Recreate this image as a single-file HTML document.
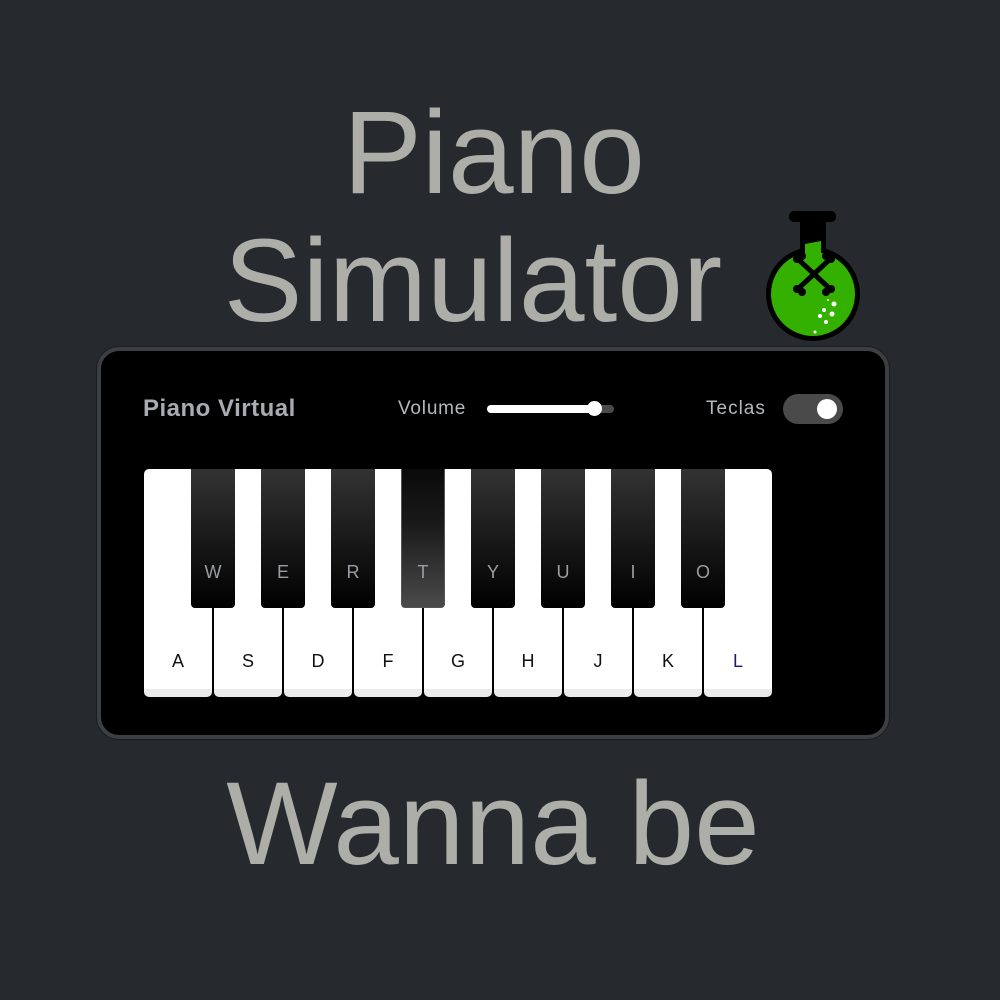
<!DOCTYPE html>
<html><head><meta charset="utf-8"><style>
*{margin:0;padding:0;box-sizing:border-box}
body{width:1000px;height:1000px;background:#262a2f;position:relative;overflow:hidden;font-family:"Liberation Sans",sans-serif}
.t{position:absolute;left:0;width:1000px;text-align:center;color:#aeaea8;font-size:118px;line-height:1;white-space:nowrap}
.panel{position:absolute;left:97px;top:347px;width:792px;height:392px;border-radius:22px;background:#000;border:4px solid #3b3f44;box-shadow:0 0 0 1px #1b1e21}
.lbl{position:absolute;color:#b5b9bd;font-size:18px}
.w{position:absolute;top:469px;width:68px;height:228px;background:#fff;border-radius:5px;border-bottom:8px solid #ebebeb;color:#111;font-size:18px;text-align:center;padding-top:182px}
.b{position:absolute;top:469px;width:44px;height:139px;background:linear-gradient(#333,#000);border-radius:0 0 4px 4px;color:#9a9ea3;font-size:18px;text-align:center;padding-top:93px}
</style></head><body>
<div class="t" style="top:94px;left:-6px">Piano</div>
<div class="t" style="top:222px;left:-27px">Simulator</div>
<div class="t" style="top:765px;left:-7px">Wanna be</div>
<svg style="position:absolute;left:760px;top:205px" width="110" height="140" viewBox="760 205 110 140">
<rect x="789" y="211" width="47" height="11" rx="5" fill="#000"/>
<rect x="800" y="220" width="26" height="40" fill="#000"/>
<circle cx="813" cy="294" r="47" fill="#000"/>
<circle cx="813" cy="294" r="42" fill="#33b000"/>
<path d="M805 244 L821 241 V262 H805 Z" fill="#33b000"/>
<g stroke="#000" stroke-width="5" stroke-linecap="round"><line x1="800" y1="261" x2="828" y2="287"/><line x1="828" y1="261" x2="800" y2="287"/></g>
<g fill="#000"><circle cx="797" cy="259" r="4"/><circle cx="802" cy="256" r="4"/><circle cx="831" cy="259" r="4"/><circle cx="826" cy="256" r="4"/><circle cx="797" cy="289" r="4"/><circle cx="802" cy="292" r="4"/><circle cx="831" cy="289" r="4"/><circle cx="826" cy="292" r="4"/></g>
<g fill="#fff"><circle cx="834" cy="304" r="2.5"/><circle cx="832" cy="314" r="2.5"/><circle cx="824" cy="310" r="2"/><circle cx="820" cy="316" r="2"/><circle cx="826" cy="322" r="2"/><circle cx="815" cy="332" r="1.5"/><circle cx="828" cy="300" r="1"/></g>
</svg>
<div class="panel"></div>
<div class="lbl" style="left:143px;top:395px;font-size:24px;font-weight:bold;color:#a8acb0;letter-spacing:0.5px">Piano Virtual</div>
<div class="lbl" style="left:398px;top:398px;font-size:19px;letter-spacing:0.8px">Volume</div>
<div style="position:absolute;left:487px;top:405px;width:127px;height:8px;border-radius:4px;background:#4a4a4a"></div>
<div style="position:absolute;left:487px;top:405px;width:108px;height:8px;border-radius:4px;background:#fff"></div>
<div style="position:absolute;left:587px;top:401px;width:15px;height:15px;border-radius:50%;background:#fff"></div>
<div class="lbl" style="left:706px;top:398px;font-size:19px;letter-spacing:1px">Teclas</div>
<div style="position:absolute;left:783px;top:394px;width:60px;height:30px;border-radius:15px;background:#4a4a4a"></div>
<div style="position:absolute;left:817px;top:399px;width:20px;height:20px;border-radius:50%;background:#fff"></div>
<div>
<div class="w" style="left:144px">A</div><div class="w" style="left:214px">S</div><div class="w" style="left:284px">D</div><div class="w" style="left:354px">F</div><div class="w" style="left:424px">G</div><div class="w" style="left:494px">H</div><div class="w" style="left:564px">J</div><div class="w" style="left:634px">K</div><div class="w" style="left:704px;color:#1a1a6a">L</div>
</div>
<div class="b" style="left:191px">W</div><div class="b" style="left:261px">E</div><div class="b" style="left:331px">R</div>
<div class="b" style="left:401px;background:linear-gradient(#0a0a0a,#1a1a1a 40%,#4a4a4a);border:1px solid #555;border-top:none">T</div>
<div class="b" style="left:471px">Y</div><div class="b" style="left:541px">U</div><div class="b" style="left:611px">I</div><div class="b" style="left:681px">O</div>
</body></html>
